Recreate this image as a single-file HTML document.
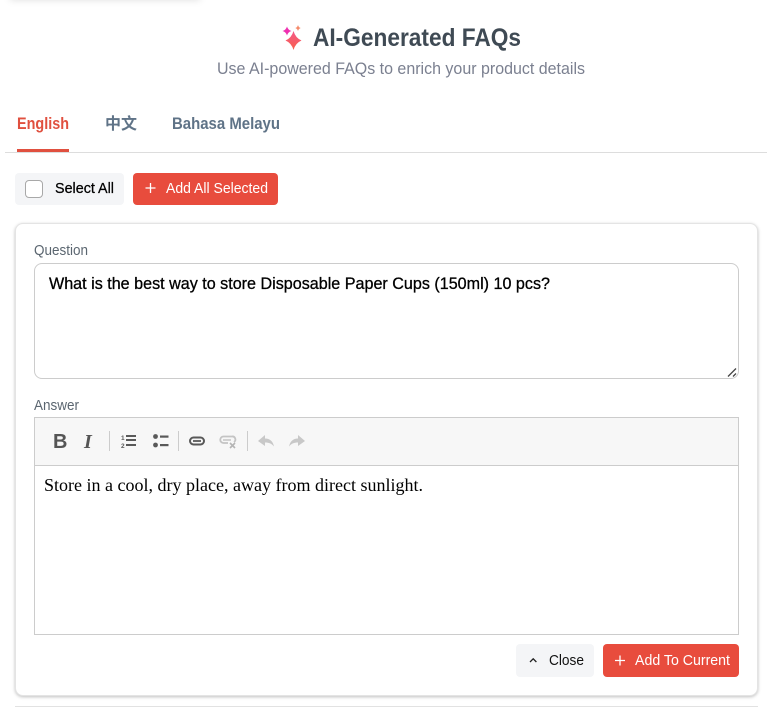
<!DOCTYPE html>
<html><head><meta charset="utf-8"><title>AI-Generated FAQs</title>
<style>
html,body{margin:0;padding:0;background:#fff;width:767px;height:707px;overflow:hidden}
body{position:relative;font-family:"Liberation Sans","Noto Sans CJK SC",sans-serif}
.b{position:absolute;box-sizing:border-box}
svg{position:absolute;left:0;top:0}
text{font-family:"Liberation Sans","Noto Sans CJK SC",sans-serif}
</style></head><body>
<div class="b" style="left:10px;top:-12px;width:190px;height:12px;box-shadow:0 0 8px rgba(0,0,0,.13)"></div>
<div class="b" style="left:5px;top:152px;width:762px;height:1px;background:#ddd"></div>
<div class="b" style="left:17px;top:149px;width:52px;height:3px;background:#e0503f"></div>
<div class="b" style="left:15px;top:173px;width:109px;height:32px;background:#f4f5f7;border-radius:4px"></div>
<div class="b" style="left:25px;top:180px;width:18px;height:18px;background:#fff;border:1px solid #a8a8a8;border-radius:4px"></div>
<div class="b" style="left:133px;top:173px;width:145px;height:32px;background:#e84c3d;border-radius:4px"></div>
<div class="b" style="left:15px;top:223px;width:743px;height:473px;background:#fff;border:1px solid #e4e4e4;border-radius:8px;box-shadow:0 1px 3px rgba(0,0,0,.25)"></div>
<div class="b" style="left:34px;top:263px;width:705px;height:116px;border:1px solid #ccc;border-radius:8px"></div>
<div class="b" style="left:34px;top:417px;width:705px;height:218px;border:1px solid #ccc"></div>
<div class="b" style="left:35px;top:418px;width:703px;height:48px;background:#f7f7f7;border-bottom:1px solid #ccc"></div>
<div class="b" style="left:109px;top:431px;width:1px;height:20px;background:#ccc"></div>
<div class="b" style="left:178px;top:431px;width:1px;height:20px;background:#ccc"></div>
<div class="b" style="left:247px;top:431px;width:1px;height:20px;background:#ccc"></div>
<div class="b" style="left:516px;top:644px;width:78px;height:33px;background:#f4f5f7;border-radius:4px"></div>
<div class="b" style="left:603px;top:644px;width:136px;height:33px;background:#e84c3d;border-radius:4px"></div>
<div class="b" style="left:15px;top:706px;width:743px;height:1px;background:#e2e2e2"></div>

<svg width="767" height="707" viewBox="0 0 767 707">
<defs><linearGradient id="g" x1="0" y1="0" x2="0" y2="1"><stop offset="0" stop-color="#f4578a"/><stop offset="1" stop-color="#f8604a"/></linearGradient></defs>
<path fill="url(#g)" d="M293.500 31 Q295.500 38 301.500 40.500 Q295.500 43 293.500 50 Q291.500 43 285.500 40.500 Q291.500 38 293.500 31Z"/>
<path fill="#ee2fb0" d="M287 26.500 Q288 30 291.500 31 Q288 32 287 35.500 Q286 32 282.500 31 Q286 30 287 26.500Z"/>
<path fill="#f58a6a" d="M298 25 Q298.600 27.500 300.700 28 Q298.600 28.800 298 31 Q297.400 28.800 295.300 28 Q297.400 27.500 298 25Z"/>

<text x="313" y="46" font-size="25" font-weight="700" fill="#3f4a54" textLength="208" lengthAdjust="spacingAndGlyphs">AI-Generated FAQs</text>
<text x="217" y="74" font-size="16.500" fill="#7b8090" textLength="368" lengthAdjust="spacingAndGlyphs">Use AI-powered FAQs to enrich your product details</text>

<text x="17" y="129" font-size="17" font-weight="700" fill="#e0503f" textLength="52" lengthAdjust="spacingAndGlyphs">English</text>
<text x="105" y="129" font-size="16" font-weight="700" fill="#5f7387">中文</text>
<text x="172" y="129" font-size="17" font-weight="700" fill="#5f7387" textLength="108" lengthAdjust="spacingAndGlyphs">Bahasa Melayu</text>

<text x="55" y="193" font-size="15" fill="#000" stroke="#000" stroke-width=".25" textLength="59" lengthAdjust="spacingAndGlyphs">Select All</text>
<path d="M145.500 188h10M150.500 183v10" stroke="#fff" stroke-width="1.300" fill="none"/>
<text x="166" y="193" font-size="15" fill="#fff" textLength="102" lengthAdjust="spacingAndGlyphs">Add All Selected</text>

<text x="34" y="255" font-size="15" fill="#5b6670" textLength="54" lengthAdjust="spacingAndGlyphs">Question</text>
<text x="49" y="289" font-size="17" fill="#000" stroke="#000" stroke-width=".3" textLength="501" lengthAdjust="spacingAndGlyphs">What is the best way to store Disposable Paper Cups (150ml) 10 pcs?</text>
<path d="M728 376.500L736 368.500M733 376.500L736 373.500" stroke="#444" stroke-width="1.300" fill="none"/>

<text x="34" y="410" font-size="15" fill="#5b6670" textLength="45" lengthAdjust="spacingAndGlyphs">Answer</text>

<text x="53" y="448" font-size="20" font-weight="700" fill="#555">B</text>
<text x="84" y="448" font-size="20" font-weight="700" font-style="italic" style="font-family:'Liberation Serif',serif" fill="#555">I</text>

<g fill="#595959">
<rect x="126" y="435" width="10" height="2"/><rect x="126" y="439.500" width="10" height="0"/><rect x="126" y="439" width="10" height="2"/><rect x="126" y="444" width="10" height="2"/>
<text x="121" y="440" font-size="6.500" font-weight="700">1</text><text x="121" y="448" font-size="6.500" font-weight="700">2</text>
<circle cx="155.500" cy="436.500" r="2.400"/><circle cx="155.500" cy="445" r="2.400"/>
<rect x="160" y="435.500" width="8.500" height="2.200"/><rect x="160" y="444" width="8.500" height="2.200"/>
</g>
<rect x="190" y="437.500" width="14" height="7" rx="3.500" fill="none" stroke="#595959" stroke-width="2"/>
<path d="M193 441h8" stroke="#595959" stroke-width="1.800"/>
<g stroke="#c4c4c4" fill="none">
<path d="M228 443h-4.500a3 3 0 0 1 0-6.500h8.500a3 3 0 0 1 2 5.500" stroke-width="1.800"/>
<path d="M223 440h8" stroke-width="1.500"/>
<path d="M230 443l5 5M235 443l-5 5" stroke="#b5b5b5" stroke-width="1.600"/>
</g>
<path fill="#c8c8c8" d="M258 441l7-6v3.500c5 0 8 3 9 8-2.500-3-5-4-9-4V446z"/>
<path fill="#c8c8c8" d="M305 441l-7-6v3.500c-5 0-8 3-9 8 2.500-3 5-4 9-4V446z"/>

<text x="44" y="491" font-size="18" fill="#000" style="font-family:'Liberation Serif',serif" textLength="379" lengthAdjust="spacingAndGlyphs">Store in a cool, dry place, away from direct sunlight.</text>

<path d="M530 662l3.200-3.200 3.200 3.200" stroke="#222" stroke-width="1.300" fill="none"/>
<text x="549" y="665" font-size="15" fill="#111" textLength="35" lengthAdjust="spacingAndGlyphs">Close</text>
<path d="M615 660.500h10M620 655.500v10" stroke="#fff" stroke-width="1.300" fill="none"/>
<text x="635" y="665" font-size="15" fill="#fff" textLength="95" lengthAdjust="spacingAndGlyphs">Add To Current</text>
</svg>
</body></html>
